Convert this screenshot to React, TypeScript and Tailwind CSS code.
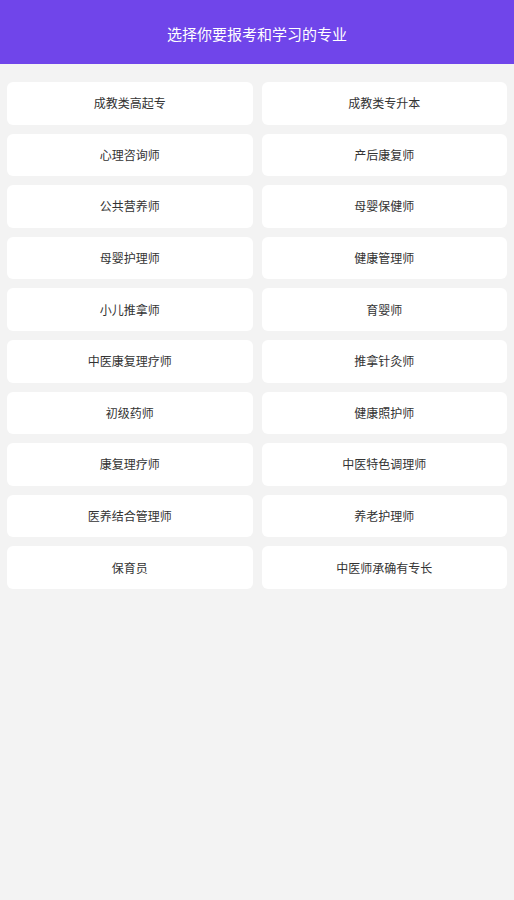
import React from "react";

const items = [
  "成教类高起专",
  "成教类专升本",
  "心理咨询师",
  "产后康复师",
  "公共营养师",
  "母婴保健师",
  "母婴护理师",
  "健康管理师",
  "小儿推拿师",
  "育婴师",
  "中医康复理疗师",
  "推拿针灸师",
  "初级药师",
  "健康照护师",
  "康复理疗师",
  "中医特色调理师",
  "医养结合管理师",
  "养老护理师",
  "保育员",
  "中医师承确有专长",
];

export default function App() {
  return (
    <div
      className="min-h-[900px] w-full bg-[#f3f3f3]"
      style={{ fontFamily: '"Noto Sans CJK SC", "Noto Sans", sans-serif' }}
    >
      <div className="flex h-[64px] items-center justify-center bg-[#7045ea] pt-[4px]">
        <span className="text-[15px] text-white">选择你要报考和学习的专业</span>
      </div>
      <div className="grid grid-cols-2 gap-x-[9px] gap-y-[9px] px-[7px] pt-[18px]">
        {items.map((t) => (
          <div
            key={t}
            className="flex h-[42.6px] items-center justify-center rounded-[6px] bg-white text-[12px] text-[#333333]"
          >
            {t}
          </div>
        ))}
      </div>
    </div>
  );
}
